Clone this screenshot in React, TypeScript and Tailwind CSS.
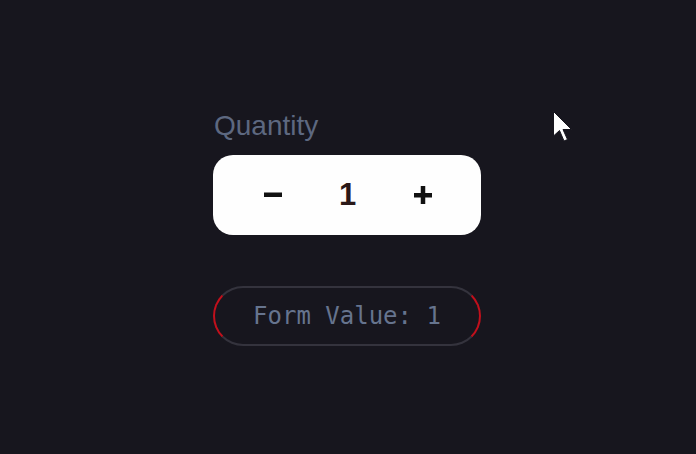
import React from "react";

function Cursor() {
  return (
    <svg
      className="absolute left-[552px] top-[110px]"
      width="24"
      height="36"
      viewBox="0 0 24 36"
    >
      <path
        d="M1.5 1.5 L1.5 26 L7.5 20.5 L12 31 L15.5 29.5 L11 19.5 L19.5 19.5 Z"
        fill="#ffffff"
        stroke="#17161e"
        strokeWidth="1"
      />
    </svg>
  );
}

export default function App() {
  return (
    <div className="relative h-[454px] w-full bg-[#17161e] flex items-center justify-center overflow-hidden">
      <div className="w-[268px] mr-[2px] mt-[2px] flex flex-col">
        <div
          className="text-[28px] leading-[32px] text-[#5d6880] pl-[1px]"
          style={{ fontFamily: '"Liberation Sans", Arial, sans-serif' }}
        >
          Quantity
        </div>
        <div className="mt-[13px] h-[80px] rounded-[20px] bg-[#fefefe] flex items-center justify-center gap-[25px] pl-[1px]">
          <button className="w-[50px] h-[40px] flex items-center justify-center">
            <svg width="20" height="20" viewBox="0 0 20 20">
              <rect x="1" y="7.5" width="18" height="4.5" fill="#111111" />
            </svg>
          </button>
          <span
            className="w-[50px] text-center text-[31px] font-bold leading-[40px] text-[#2a1818]"
            style={{ fontFamily: '"Liberation Sans", Arial, sans-serif' }}
          >
            1
          </span>
          <button className="w-[50px] h-[40px] flex items-center justify-center">
            <svg width="20" height="20" viewBox="0 0 20 20">
              <rect x="1" y="8" width="18" height="4.5" fill="#111111" />
              <rect x="7.75" y="1" width="4.5" height="18" fill="#111111" />
            </svg>
          </button>
        </div>
        <div
          className="mt-[51px] h-[60px] rounded-full border-2 border-y-[#34333d] border-x-[#c1101c] flex items-center justify-center text-[24px] text-[#66748e]"
          style={{ fontFamily: '"DejaVu Sans Mono", "Liberation Mono", monospace' }}
        >
          Form Value: 1
        </div>
      </div>
      <Cursor />
    </div>
  );
}
